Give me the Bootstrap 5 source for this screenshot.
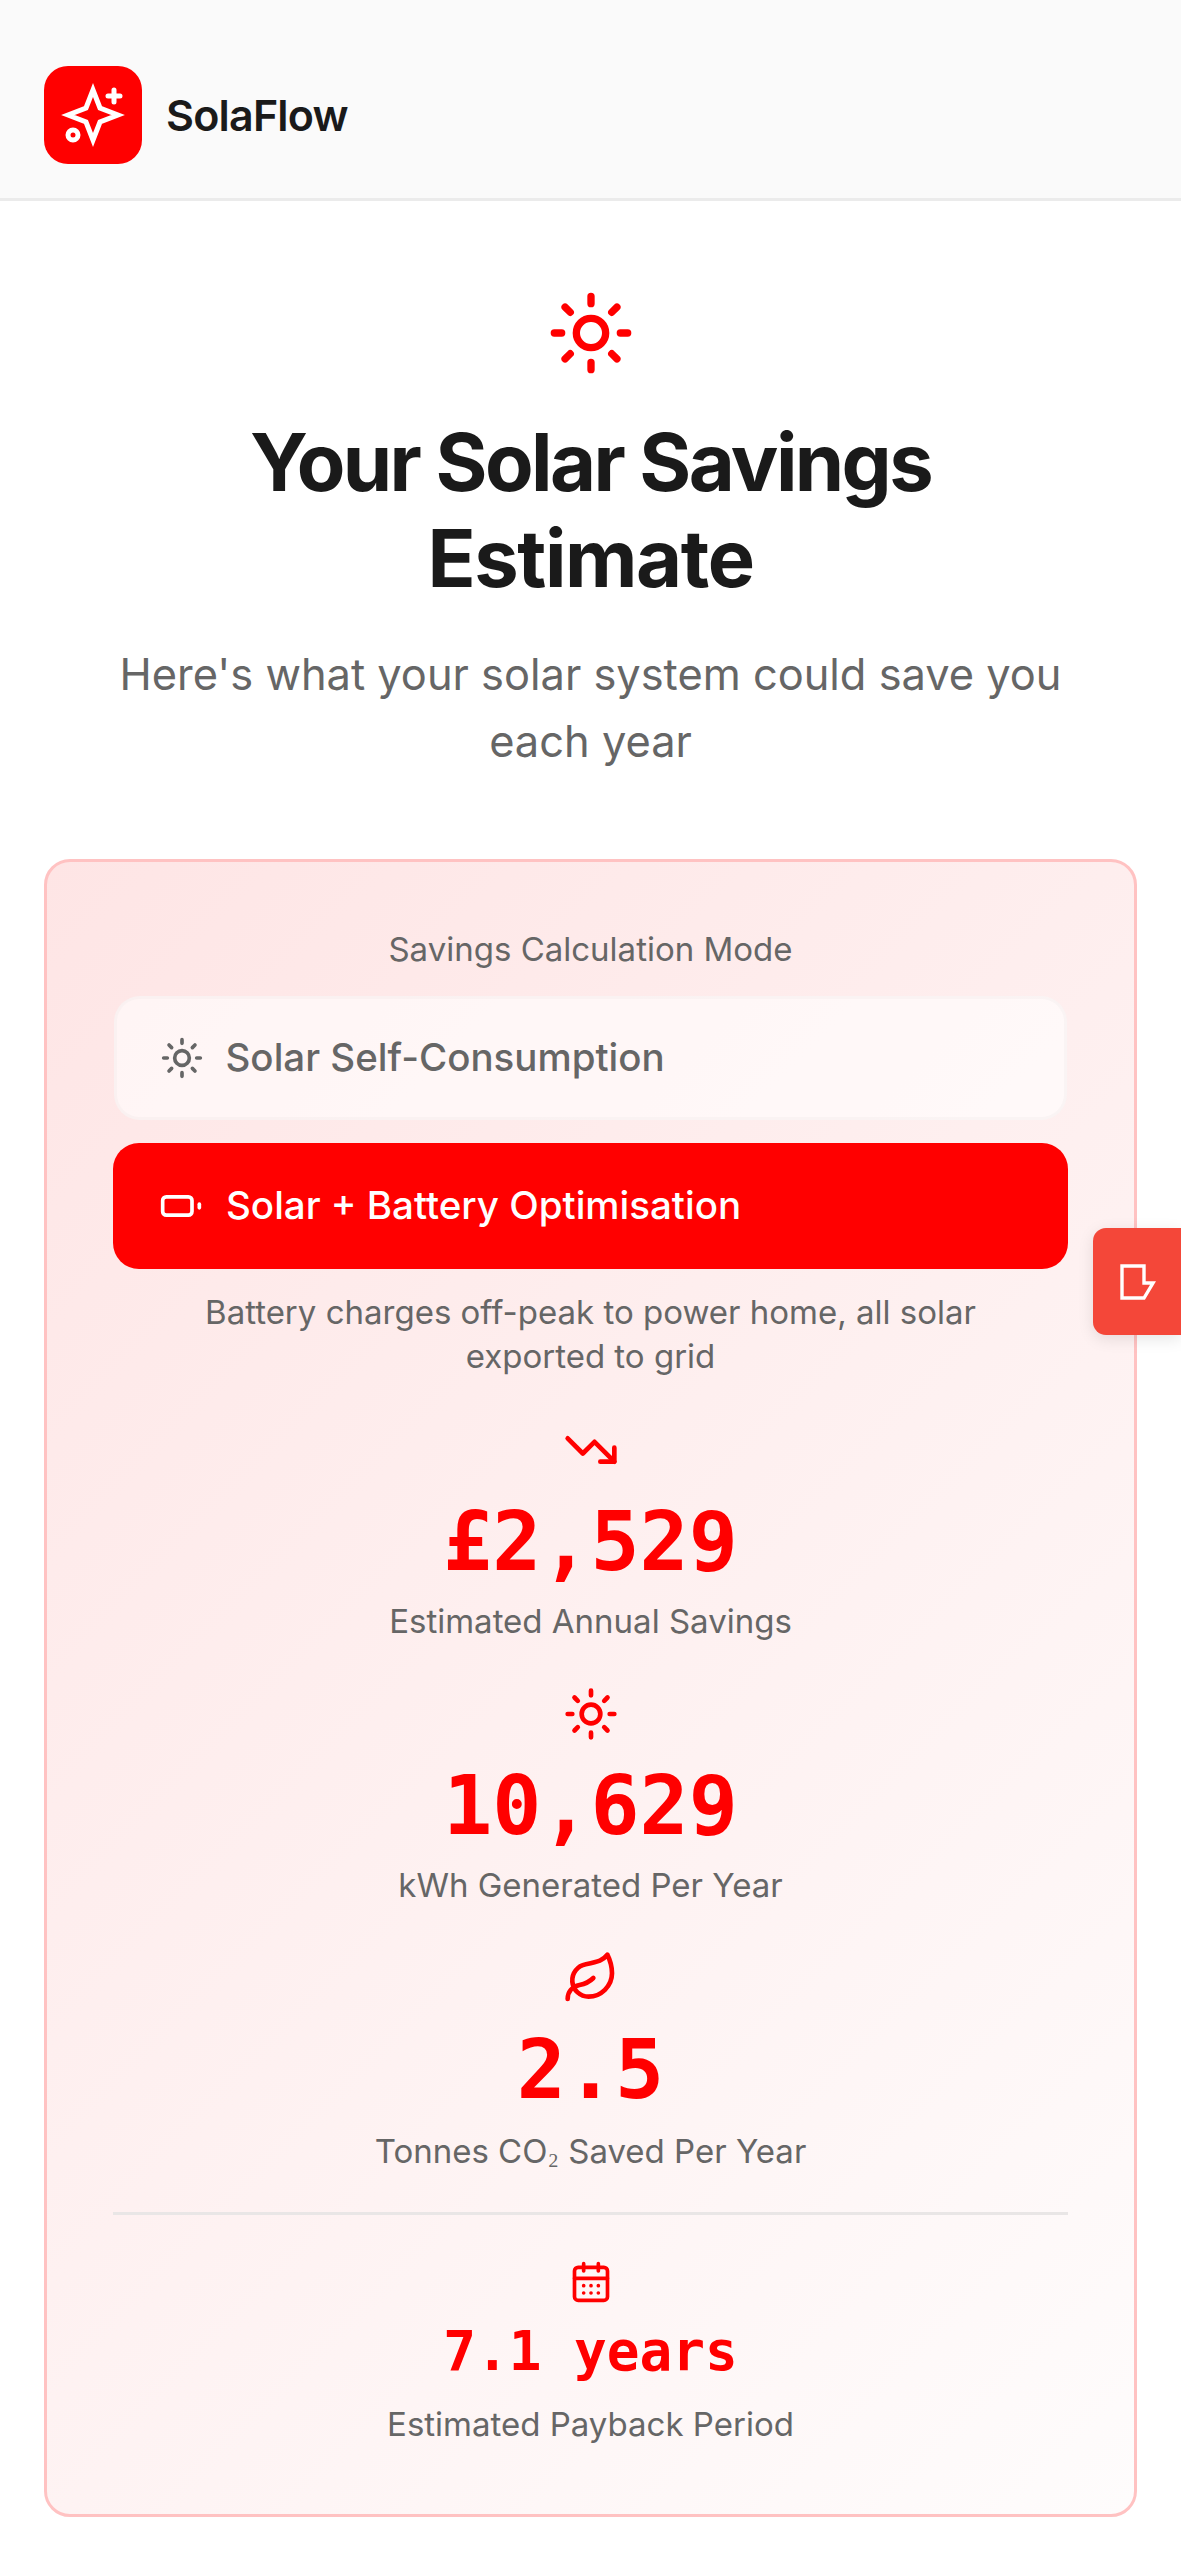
<!DOCTYPE html>
<html lang="en">
<head>
  <meta charset="UTF-8" />
  <meta name="viewport" content="width=device-width, initial-scale=1.0"/>
  <title>SolaFlow - Savings Estimate</title>
  <link href="https://cdn.jsdelivr.net/npm/bootstrap@5.3.3/dist/css/bootstrap.min.css" rel="stylesheet">
  <style>
    body { font-family: Inter, "Liberation Sans", sans-serif; color: #1a1a1a; background: #fff; }
    .top-bar { height: 201px; padding: 32px 44px 0; background: #fafafa; border-bottom: 3px solid #ebebeb; }
    .logo-box { width: 98px; height: 98px; border-radius: 24px; background: #f00; }
    .brand-name { margin-left: 24px; font-size: 43px; font-weight: 600; letter-spacing: -0.8px; }
    .hero-box { padding: 88px 44px 0; }
    .hero-title { margin: 37px 0 35px; font-size: 79.4px; line-height: 96px; font-weight: 700; letter-spacing: -2.6px; color: #1a1a1a; }
    .title-end { letter-spacing: -1.4px; }
    .hero-sub { margin: 0; font-size: 43.4px; line-height: 67px; color: #666; }
    .result-box { margin: 84px 44px 0; padding: 64px 66px 65px; border: 3px solid #ffc2c2; border-radius: 26px; background: linear-gradient(135deg, #fee5e5 0%, #fefcfc 100%); }
    .mode-label { margin-bottom: 24px; font-size: 33px; line-height: 46px; color: #666; }
    .mode-btn { width: 100%; height: 124px; padding: 0 46px; gap: 23px; border-radius: 26px; font-size: 38.5px; font-weight: 500; }
    .mode-off { width: calc(100% - 2px); margin: 0 1px; padding: 0 42.5px; gap: 22px; background: rgba(255,255,255,.6); border: 3px solid rgba(0,0,0,.02); color: #666; }
    .mode-on { height: 126px; margin-top: 23px; background: #f00; border: 0; color: #fff; }
    .mode-note { margin: 21px 0 44px; font-size: 33px; line-height: 44px; color: #666; }
    .stat-box { margin-top: 40px; }
    .stat-num { margin: 20px 0 10px; font-family: "DejaVu Sans Mono", "Liberation Mono", monospace; font-weight: 700; font-size: 81.6px; line-height: 88px; color: #f00; }
    .stat-num-sm { margin: 12px 0 11px; font-size: 54.4px; line-height: 72px; }
    .stat-text { font-size: 33px; line-height: 50px; color: #666; }
    .sub-two { font-family: "Liberation Serif", serif; vertical-align: 3px; }
    .stat-line { margin: 36px 0 0; border-top: 3px solid #e9e6e6; opacity: 1; }
    .stat-line + .stat-box { margin-top: 45px; }
    .side-tab { position: fixed; top: 1228px; right: 0; width: 88px; height: 107px; border-radius: 13px 0 0 13px; background: #f44739; box-shadow: 0 4px 16px rgba(0,0,0,.1); }
    svg.line-ico { flex-shrink: 0; fill: none; stroke: currentColor; stroke-width: 2; stroke-linecap: round; stroke-linejoin: round; }
    .ico-red { color: #f00; }
  </style>
</head>
<body>
  <header class="top-bar d-flex align-items-center">
    <div class="logo-box d-flex align-items-center justify-content-center">
      <svg width="98" height="98" viewBox="0 0 98 98" fill="none" stroke="#fff" stroke-width="5">
        <path d="M49 24 L56 42 L74 49 L56 56 L49 74 L42 56 L24 49 L42 42 Z" stroke-linejoin="miter" stroke-miterlimit="12"/>
        <path d="M70 24v12M64 30h12" stroke-linecap="round"/>
        <circle cx="29" cy="69" r="5"/>
      </svg>
    </div>
    <span class="brand-name">SolaFlow</span>
  </header>

  <main>
    <section class="hero-box text-center">
      <svg class="line-ico ico-red d-block mx-auto" width="88" height="88" viewBox="0 0 24 24">
        <circle cx="12" cy="12" r="4"/><path d="M12 2v2M12 20v2M4.93 4.93l1.41 1.41M17.66 17.66l1.41 1.41M2 12h2M20 12h2M6.34 17.66l-1.41 1.41M19.07 4.93l-1.41 1.41"/>
      </svg>
      <h1 class="hero-title">Your Solar Savings<br><span class="title-end">Estimate</span></h1>
      <p class="hero-sub">Here's what your solar system could save you<br>each year</p>
    </section>

    <section class="result-box text-center">
      <div class="mode-label">Savings Calculation Mode</div>
      <button type="button" class="btn mode-btn mode-off d-flex align-items-center">
        <svg class="line-ico" width="44" height="44" viewBox="0 0 24 24">
          <circle cx="12" cy="12" r="4"/><path d="M12 2v2M12 20v2M4.93 4.93l1.41 1.41M17.66 17.66l1.41 1.41M2 12h2M20 12h2M6.34 17.66l-1.41 1.41M19.07 4.93l-1.41 1.41"/>
        </svg>
        Solar Self-Consumption
      </button>
      <button type="button" class="btn mode-btn mode-on d-flex align-items-center">
        <svg class="line-ico" width="44" height="44" viewBox="0 0 24 24">
          <rect width="16" height="10" x="2" y="7" rx="2" ry="2"/><path d="M22 11v2"/>
        </svg>
        Solar + Battery Optimisation
      </button>
      <p class="mode-note">Battery charges off-peak to power home, all solar<br>exported to grid</p>

      <div class="stat-box">
        <svg class="line-ico ico-red d-block mx-auto" width="56" height="56" viewBox="0 0 24 24">
          <path d="M22 17l-8.5-8.5-5 5L2 7"/><path d="M16 17h6v-6"/>
        </svg>
        <div class="stat-num">£2,529</div>
        <div class="stat-text">Estimated Annual Savings</div>
      </div>

      <div class="stat-box">
        <svg class="line-ico ico-red d-block mx-auto" width="56" height="56" viewBox="0 0 24 24">
          <circle cx="12" cy="12" r="4"/><path d="M12 2v2M12 20v2M4.93 4.93l1.41 1.41M17.66 17.66l1.41 1.41M2 12h2M20 12h2M6.34 17.66l-1.41 1.41M19.07 4.93l-1.41 1.41"/>
        </svg>
        <div class="stat-num">10,629</div>
        <div class="stat-text">kWh Generated Per Year</div>
      </div>

      <div class="stat-box">
        <svg class="line-ico ico-red d-block mx-auto" width="56" height="56" viewBox="0 0 24 24">
          <path d="M11 20A7 7 0 0 1 9.8 6.1C15.5 5 17 4.48 19 2c1 2 2 4.18 2 8 0 5.5-4.78 10-10 10Z"/><path d="M2 21c0-3 1.85-5.36 5.08-6C9.5 14.52 12 13 13 12"/>
        </svg>
        <div class="stat-num">2.5</div>
        <div class="stat-text">Tonnes CO<span class="sub-two">₂</span> Saved Per Year</div>
      </div>

      <hr class="stat-line">

      <div class="stat-box">
        <svg class="line-ico ico-red d-block mx-auto" width="44" height="44" viewBox="0 0 24 24">
          <path d="M8 2v4M16 2v4"/><rect width="18" height="18" x="3" y="4" rx="2"/><path d="M3 10h18M8 14h.01M12 14h.01M16 14h.01M8 18h.01M12 18h.01M16 18h.01"/>
        </svg>
        <div class="stat-num stat-num-sm">7.1 years</div>
        <div class="stat-text">Estimated Payback Period</div>
      </div>
    </section>
  </main>

  <a class="side-tab d-flex align-items-center justify-content-center" href="#" aria-label="Feedback">
    <svg width="40" height="40" viewBox="0 0 40 40" fill="none" stroke="#fff" stroke-width="3.4">
      <path d="M5 4H27V21H36L27 36H5Z"/>
    </svg>
  </a>

  <script src="https://cdn.jsdelivr.net/npm/bootstrap@5.3.3/dist/js/bootstrap.bundle.min.js"></script>
</body>
</html>
